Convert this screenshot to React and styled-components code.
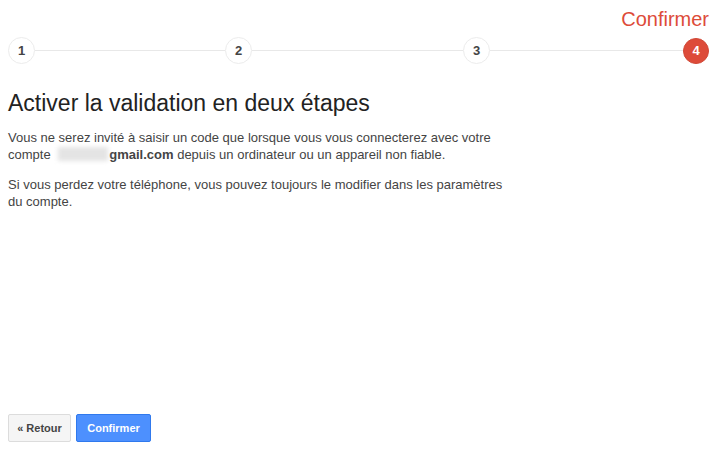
import React from "react";
import styled, { createGlobalStyle } from "styled-components";

const Global = createGlobalStyle`
  html, body { margin: 0; padding: 0; background: #fff; }
  body { font-family: Arial, "Liberation Sans", sans-serif; }
`;

const Page = styled.div`
  box-sizing: border-box;
  height: 454px;
  padding: 0 8px 12px 8px;
  display: flex;
  flex-direction: column;
`;

const StepLabel = styled.div`
  height: 34px;
  margin-top: -3px;
  display: flex;
  justify-content: flex-end;
  align-items: flex-end;
  color: #dd4b39;
  font-size: 20px;
  line-height: 24px;
`;

const Stepper = styled.div`
  display: grid;
  grid-template-columns: 27px 190px 27px 211px 27px 193px 26px;
  align-items: center;
  margin-top: 6px;
`;

const Circle = styled.div`
  box-sizing: border-box;
  width: ${(p) => (p.$active ? 26 : 27)}px;
  height: ${(p) => (p.$active ? 26 : 27)}px;
  border-radius: 50%;
  border: 1px solid ${(p) => (p.$active ? "#d14836" : "#ececec")};
  background: ${(p) => (p.$active ? "#dd4b39" : "#fff")};
  color: ${(p) => (p.$active ? "#fff" : "#444")};
  font-size: 13px;
  font-weight: bold;
  display: flex;
  align-items: center;
  justify-content: center;
`;

const Line = styled.div`
  height: 1px;
  background: #e8e8e8;
`;

const Title = styled.h1`
  margin: 25px 0 0 0;
  font-weight: normal;
  font-size: 23px;
  line-height: 28px;
  color: #222;
`;

const Para = styled.p`
  margin: ${(p) => p.$mt}px 0 0 0;
  max-width: 500px;
  font-size: 13px;
  line-height: 17px;
  color: #444;
`;

const Blur = styled.span`
  display: inline-block;
  width: 50px;
  height: 14px;
  vertical-align: -2px;
  margin: 0 1px 0 4px;
  background: #e4e4e4;
  filter: blur(2px);
`;

const Spacer = styled.div`
  flex: 1;
`;

const Buttons = styled.div`
  display: flex;
  gap: 5px;
`;

const Button = styled.button`
  box-sizing: border-box;
  height: 28px;
  padding: 0 8px;
  border-radius: 2px;
  border: 1px solid ${(p) => (p.$primary ? "#3079ed" : "#dcdcdc")};
  background: ${(p) => (p.$primary ? "#4d90fe" : "#f5f5f5")};
  color: ${(p) => (p.$primary ? "#fff" : "#444")};
  font-family: Arial, "Liberation Sans", sans-serif;
  font-size: 11px;
  font-weight: bold;
  min-width: ${(p) => (p.$primary ? 75 : 63)}px;
`;

export default function App() {
  const steps = [1, 2, 3, 4];
  return (
    <>
      <Global />
      <Page>
        <StepLabel>Confirmer</StepLabel>
        <Stepper>
          {steps.map((s, i) => (
            <React.Fragment key={s}>
              <Circle $active={s === 4}>{s}</Circle>
              {i < steps.length - 1 && <Line />}
            </React.Fragment>
          ))}
        </Stepper>
        <Title>Activer la validation en deux étapes</Title>
        <Para $mt={12}>
          Vous ne serez invité à saisir un code que lorsque vous vous connecterez avec votre
          compte <Blur /><b>gmail.com</b> depuis un ordinateur ou un appareil non fiable.
        </Para>
        <Para $mt={13}>
          Si vous perdez votre téléphone, vous pouvez toujours le modifier dans les paramètres
          du compte.
        </Para>
        <Spacer />
        <Buttons>
          <Button>« Retour</Button>
          <Button $primary>Confirmer</Button>
        </Buttons>
      </Page>
    </>
  );
}
